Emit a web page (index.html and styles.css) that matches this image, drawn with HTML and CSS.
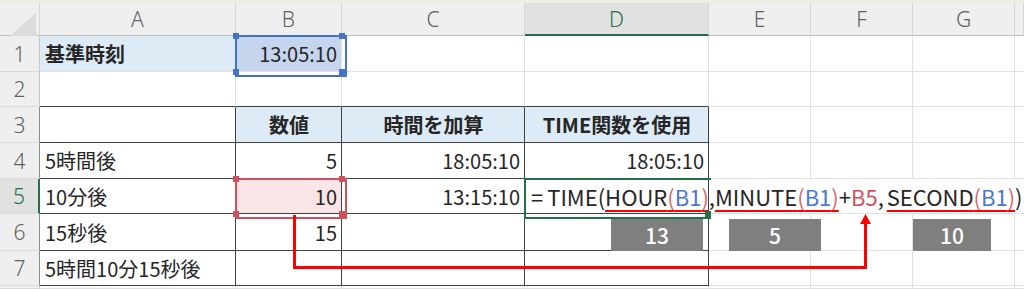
FILE: index.html
```html
<!DOCTYPE html>
<html lang="ja">
<head>
<meta charset="utf-8">
<link rel="stylesheet" href="styles.css">
</head>
<body>
<div class="sheet">
  <div class="strip"></div>

  <div class="ch corner"><span class="tri"></span></div>
  <div class="ch">A</div>
  <div class="ch">B</div>
  <div class="ch">C</div>
  <div class="ch sel">D</div>
  <div class="ch">E</div>
  <div class="ch">F</div>
  <div class="ch">G</div>
  <div class="ch"></div>

  <div class="rh">1</div>
  <div class="c hd b">基準時刻</div>
  <div class="c r ref blue">13:05:10<span class="k tl"></span><span class="k tr"></span><span class="k bl"></span><span class="k br"></span></div>
  <div class="c"></div>
  <div class="c"></div>
  <div class="c"></div>
  <div class="c"></div>
  <div class="c"></div>
  <div class="c"></div>

  <div class="rh">2</div>
  <div class="c tt"></div>
  <div class="c tt"></div>
  <div class="c tt"></div>
  <div class="c tt"></div>
  <div class="c"></div>
  <div class="c"></div>
  <div class="c"></div>
  <div class="c"></div>

  <div class="rh rt">3</div>
  <div class="c t"></div>
  <div class="c t hd b m">数値</div>
  <div class="c t hd b m">時間を加算</div>
  <div class="c t hd b m">TIME関数を使用</div>
  <div class="c"></div>
  <div class="c"></div>
  <div class="c"></div>
  <div class="c"></div>

  <div class="rh rt">4</div>
  <div class="c t">5時間後</div>
  <div class="c t r">5</div>
  <div class="c t r">18:05:10</div>
  <div class="c t r">18:05:10</div>
  <div class="c"></div>
  <div class="c"></div>
  <div class="c"></div>
  <div class="c"></div>

  <div class="rh rt cur">5</div>
  <div class="c t">10分後</div>
  <div class="c t r ref red">10<span class="k tl"></span><span class="k tr"></span><span class="k bl"></span><span class="k br"></span></div>
  <div class="c t r">13:15:10</div>
  <div class="c t edit"><span class="f"><i class="eq">=</i>TIME(<u>HOUR<i class="p">(</i><i class="rb">B1</i><i class="p">)</i></u>,<u>MINUTE<i class="p">(</i><i class="rb">B1</i><i class="p">)</i></u>+<i class="rr">B5</i>,<u class="sec">SECOND<i class="p">(</i><i class="rb">B1</i><i class="p">)</i></u>)</span><span class="fh"></span></div>
  <div class="c nr"></div>
  <div class="c nr"></div>
  <div class="c nr"></div>
  <div class="c"></div>

  <div class="rh rt">6</div>
  <div class="c t">15秒後</div>
  <div class="c t r">15</div>
  <div class="c t"></div>
  <div class="c t"></div>
  <div class="c"></div>
  <div class="c"></div>
  <div class="c"></div>
  <div class="c"></div>

  <div class="rh rt">7</div>
  <div class="c t">5時間10分15秒後</div>
  <div class="c t"></div>
  <div class="c t"></div>
  <div class="c t"></div>
  <div class="c"></div>
  <div class="c"></div>
  <div class="c"></div>
  <div class="c"></div>

  <div class="rh"></div>
  <div class="c"></div>
  <div class="c"></div>
  <div class="c"></div>
  <div class="c"></div>
  <div class="c"></div>
  <div class="c"></div>
  <div class="c"></div>
  <div class="c"></div>

  <div class="tag tag1">13</div>
  <div class="tag tag2">5</div>
  <div class="tag tag3">10</div>

  <svg class="arrow" width="1024" height="289" viewBox="0 0 1024 289">
    <path d="M294.5 215 V267.5 H865.5 V222" fill="none" stroke="#ff0000" stroke-width="3"/>
    <polygon points="865.5,214 860,224 871,224" fill="#ff0000"/>
  </svg>
</div>
</body>
</html>
```
FILE: styles.css
```css
* { box-sizing: border-box; margin: 0; padding: 0; }
body {
  margin: 0;
  width: 1024px;
  height: 289px;
  overflow: hidden;
  background: #fff;
  font-family: "Noto Sans CJK JP", "Noto Sans", sans-serif;
}
.sheet {
  position: relative;
  display: grid;
  grid-template-columns: 40px 196px 106px 183px 184px 102px 102px 102px 9px;
  grid-template-rows: 3px 33px 36px 35px 36px 36px 35px 37px 35px 3px;
}
.strip { grid-column: 1 / -1; background: #e9efe2; }
.ch {
  background: #efefef;
  border-right: 1px solid #d6d6d6;
  border-bottom: 1px solid #bdbdbd;
  display: flex; align-items: center; justify-content: center;
  color: #5f5f5f;
  font-family: "Noto Sans", sans-serif;
  font-size: 21px;
  font-weight: 300;
}
.ch.sel {
  background: #e1e1e1;
  color: #217346;
  border-bottom: 2px solid #217346;
}
.corner { position: relative; }
.tri {
  position: absolute; left: 10px; top: 10px;
  width: 0; height: 0;
  border-left: 26px solid transparent;
  border-bottom: 23px solid #dcdcdc;
}
.rh {
  background: #efefef;
  border-right: 1px solid #c8c8c8;
  border-bottom: 1px solid #d9d9d9;
  display: flex; align-items: center; justify-content: center;
  color: #5f5f5f;
  font-family: "Noto Sans", sans-serif;
  font-size: 21px;
  font-weight: 300;
}
.rh.rt { border-right-color: #8c8c8c; }
.rh.cur {
  background: #e1e1e1;
  color: #217346;
  border-right: 2px solid #217346;
}
.c {
  border-right: 1px solid #e1e1e1;
  border-bottom: 1px solid #e1e1e1;
  display: flex; align-items: center;
  padding: 0 4px 0 5px;
  font-size: 20px;
  color: #262626;
  white-space: nowrap;
}
.r { justify-content: flex-end; }
.m { justify-content: center; }
.b { font-weight: 700; }
.hd { background: #ddebf7; }
.t { border-right-color: #404040; border-bottom-color: #404040; }
.tt { border-bottom-color: #404040; }
.nr { border-right-color: #fff; }

.ref { position: relative; }
.ref::after {
  content: "";
  position: absolute;
  left: -1px; top: -1px;
  width: 108px; height: 38px;
  border: 2px solid;
  pointer-events: none;
}
.blue { background: #c6d5ee; }
.blue::after { border-color: #4472c4; }
.red { background: #f9e5e5; }
.red::after { border-color: #d0505c; height: 37px; }
.k { position: absolute; width: 6px; height: 6px; z-index: 2; }
.blue .k { background: #4472c4; }
.red .k { background: #d0505c; }
.k.tl { left: -3px; top: -3px; }
.k.tr { right: -4px; top: -3px; }
.k.bl { left: -3px; bottom: -4px; }
.k.br { right: -4px; bottom: -4px; }

.edit { position: relative; overflow: visible; z-index: 3; padding-left: 6px; }
.edit::before {
  content: "";
  position: absolute;
  left: -1px; top: -1px;
  width: 185px; height: 37px;
  border: 2px solid #217346;
  border-right: none;
}
.fh {
  position: absolute; right: -3px; bottom: -4px;
  width: 6px; height: 6px; background: #217346;
}
.f { color: #262626; font-size: 22px; }
.f i { font-style: normal; }
.f .eq { margin-right: 4px; }
.f u {
  text-decoration: underline;
  text-decoration-color: #ff0000;
  text-decoration-thickness: 2px;
  text-underline-offset: 4px;
}
.f u.sec { margin-left: 3px; }
.p { color: #d86a72; }
.rb { color: #4a78d0; }
.rr { color: #d0505c; }

.tag {
  position: absolute;
  top: 219px;
  height: 32px;
  background: #7f7f7f;
  color: #fff;
  font-size: 21px;
  font-weight: 500;
  display: flex; align-items: center; justify-content: center;
  z-index: 4;
}
.tag1 { left: 611px; width: 92px; }
.tag2 { left: 729px; width: 92px; }
.tag3 { left: 913px; width: 78px; }
.arrow { position: absolute; left: 0; top: 0; z-index: 5; pointer-events: none; }
```
